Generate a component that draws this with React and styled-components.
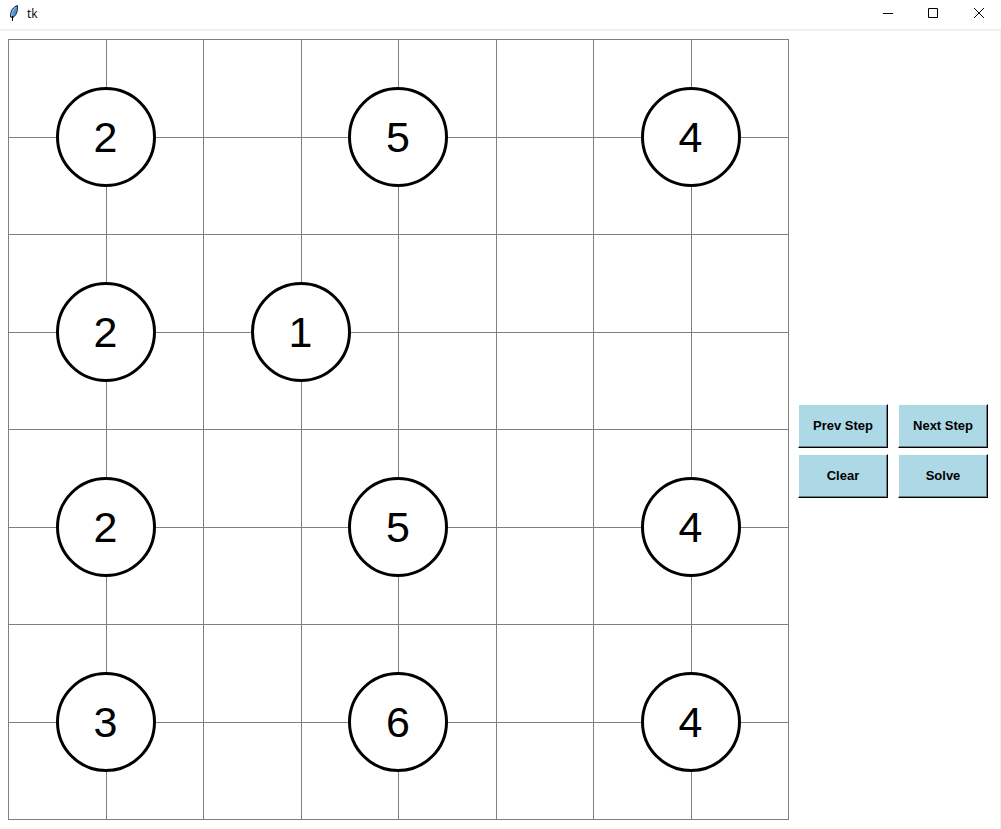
import React from "react";
import styled, { createGlobalStyle } from "styled-components";

const GlobalStyle = createGlobalStyle`
  *, *::before, *::after { box-sizing: border-box; }
  body {
    margin: 0;
    background: #fff;
    color: #000;
    font-family: "Liberation Sans", Arial, sans-serif;
  }
`;

const Window = styled.div`
  display: flex;
  flex-direction: column;
  min-height: 100vh;
`;

const TitleBar = styled.header`
  display: flex;
  align-items: center;
  height: 31px;
  padding: 0 0 3px 7px;
  border-bottom: 2px solid #f0f0f0;
`;

const Title = styled.h1`
  flex: 1;
  margin: 0 0 0 6px;
  padding-top: 2px;
  font: 400 12px/16px "Open Sans", "Segoe UI", sans-serif;
`;

const WindowButton = styled.button`
  display: grid;
  place-items: center;
  width: 45px;
  height: 26px;
  padding: 0;
  border: 0;
  background: transparent;
`;

const Content = styled.main`
  display: flex;
  flex: 1;
  align-items: flex-start;
  gap: 9px;
  padding: 8px 12px 8px 8px;
  border-right: 1px solid #f0f0f0;
`;

const Board = styled.section`
  position: relative;
  flex: 1;
  display: grid;
  grid-template: repeat(8, 1fr) / repeat(8, 1fr);
  aspect-ratio: 1;
  border: solid #808080;
  border-width: 0 1px 1px 0;
`;

const Cell = styled.div`
  border: solid #808080;
  border-width: 1px 0 0 1px;
`;

const Island = styled.div`
  position: absolute;
  left: calc(12.5% * ${(p) => p.$col});
  top: calc(12.5% * ${(p) => p.$row});
  display: grid;
  place-items: center;
  width: 100px;
  height: 100px;
  margin: -50px 0 0 -50px;
  border: 3px solid #000;
  border-radius: 50%;
  background: #fff;
  font-size: 43px;
  line-height: 48px;
`;

const Controls = styled.nav`
  display: grid;
  grid-template-columns: 90px 90px;
  gap: 6px 10px;
  align-self: center;
  padding-top: 41px;
`;

const ControlButton = styled.button`
  height: 44px;
  padding: 0;
  border: 1px solid;
  border-color: #fff #000 #000 #fff;
  box-shadow: inset -1px -1px #67818a;
  background: #add8e6;
  color: #000;
  font: 700 13px/16px "Liberation Sans", Arial, sans-serif;
`;

const islands = [
  { col: 1, row: 1, value: 2 },
  { col: 4, row: 1, value: 5 },
  { col: 7, row: 1, value: 4 },
  { col: 1, row: 3, value: 2 },
  { col: 3, row: 3, value: 1 },
  { col: 1, row: 5, value: 2 },
  { col: 4, row: 5, value: 5 },
  { col: 7, row: 5, value: 4 },
  { col: 1, row: 7, value: 3 },
  { col: 4, row: 7, value: 6 },
  { col: 7, row: 7, value: 4 },
];

const cells = Array.from({ length: 64 }, (_, i) => i);
const actions = ["Prev Step", "Next Step", "Clear", "Solve"];

const FeatherIcon = () => (
  <svg width="14" height="18" viewBox="0 0 14 18" aria-hidden="true">
    <path d="M10.500 1.500C6.500 2.500 3 7 3.500 13L6 13.500C9 11.500 11 7.500 10.500 1.500Z" fill="#4f8fd8" stroke="#1c2530" />
    <path d="M8.500 3.500C6 6 5 8.500 4.500 12" fill="none" stroke="#a9cbee" />
    <path d="M5.500 12V17" fill="none" stroke="#000" />
  </svg>
);

const windowControls = [
  { label: "Minimize", path: "M0 5.500H10" },
  { label: "Maximize", path: "M.5 .5H9.500V9.500H.5Z" },
  { label: "Close", path: "M1 0L11 10M11 0L1 10" },
];

export default function App() {
  return (
    <Window>
      <GlobalStyle />
      <TitleBar>
        <FeatherIcon />
        <Title>tk</Title>
        {windowControls.map(({ label, path }) => (
          <WindowButton key={label} type="button" aria-label={label}>
            <svg width="11" height="10" viewBox="0 0 11 10" aria-hidden="true">
              <path d={path} fill="none" stroke="#000" />
            </svg>
          </WindowButton>
        ))}
      </TitleBar>
      <Content>
        <Board aria-label="Puzzle board">
          {cells.map((i) => (
            <Cell key={i} />
          ))}
          {islands.map(({ col, row, value }) => (
            <Island key={`${col}-${row}`} $col={col} $row={row}>
              {value}
            </Island>
          ))}
        </Board>
        <Controls aria-label="Puzzle controls">
          {actions.map((name) => (
            <ControlButton key={name} type="button">
              {name}
            </ControlButton>
          ))}
        </Controls>
      </Content>
    </Window>
  );
}
